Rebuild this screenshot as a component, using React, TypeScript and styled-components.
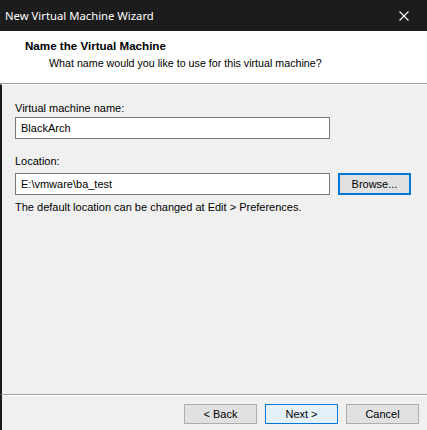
import React from 'react'
import styled, { createGlobalStyle } from 'styled-components'

const GlobalStyle = createGlobalStyle`
  html, body {
    margin: 0;
    padding: 0;
    background: #f0f0f0;
  }
  * {
    box-sizing: border-box;
  }
`

const Window = styled.div`
  width: 427px;
  height: 430px;
  display: flex;
  flex-direction: column;
  background: #f0f0f0;
  font-family: "Liberation Sans", Arial, sans-serif;
  font-size: 11px;
  color: #000;
  overflow: hidden;
`

const TitleBar = styled.div`
  height: 31px;
  flex: none;
  display: flex;
  align-items: center;
  justify-content: space-between;
  padding-left: 5px;
  background: #1c1c1c;
  color: #fff;
  font-family: "Noto Sans", "Open Sans", sans-serif;
  font-size: 11.3px;
`

const CloseButton = styled.div`
  width: 46px;
  height: 31px;
  display: flex;
  align-items: center;
  justify-content: center;
`

const Header = styled.div`
  height: 53px;
  flex: none;
  background: #fff;
  padding: 8px 0 0 25px;
  border-bottom: 1px solid #a0a0a0;
`

const HeaderTitle = styled.div`
  font-weight: bold;
  font-size: 11.6px;
  line-height: 14px;
`

const HeaderSub = styled.div`
  margin-top: 3px;
  padding-left: 24px;
  font-size: 10.7px;
  line-height: 14px;
`

const Body = styled.div`
  flex: 1;
  display: flex;
  flex-direction: column;
  padding: 16px 0 0 13px;
  border-left: 2px solid #1a1a1a;
  border-top: 1px solid #fff;
`

const Label = styled.div<{ $gap?: number }>`
  line-height: 14px;
  margin-top: ${p => p.$gap ?? 0}px;
`

const Row = styled.div<{ $gap: number }>`
  display: flex;
  align-items: center;
  gap: 8px;
  margin-top: ${p => p.$gap}px;
`

const TextBox = styled.div`
  width: 315px;
  height: 22px;
  display: flex;
  align-items: center;
  padding-left: 5px;
  background: #fff;
  border: 1px solid #7a7a7a;
`

const Hint = styled.div`
  margin-top: 5px;
  line-height: 14px;
`

const Footer = styled.div`
  height: 36px;
  flex: none;
  display: flex;
  justify-content: flex-end;
  align-items: flex-start;
  gap: 8px;
  padding: 9px 8px 0 0;
  border-left: 2px solid #1a1a1a;
  border-top: 1px solid #a0a0a0;
  box-shadow: inset 0 1px 0 #fff;
`

const Button = styled.div<{ $focus?: boolean }>`
  width: 73px;
  height: 20px;
  display: flex;
  align-items: center;
  justify-content: center;
  background: ${p => (p.$focus ? '#e5f1fb' : '#e1e1e1')};
  border: 1px solid ${p => (p.$focus ? '#0078d7' : '#adadad')};
`

const BrowseButton = styled(Button)`
  height: 22px;
  border: 2px solid #0078d7;
  background: #e1e1e1;
`

export default function App() {
  return (
    <>
      <GlobalStyle />
      <Window>
        <TitleBar>
          <span>New Virtual Machine Wizard</span>
          <CloseButton>
            <svg width="10" height="10" viewBox="0 0 10 10">
              <path d="M0.5 0.5 L9.5 9.5 M9.5 0.5 L0.5 9.5" stroke="#fff" strokeWidth="1.1" />
            </svg>
          </CloseButton>
        </TitleBar>
        <Header>
          <HeaderTitle>Name the Virtual Machine</HeaderTitle>
          <HeaderSub>What name would you like to use for this virtual machine?</HeaderSub>
        </Header>
        <Body>
          <Label>Virtual machine name:</Label>
          <Row $gap={2}>
            <TextBox>BlackArch</TextBox>
          </Row>
          <Label $gap={15}>Location:</Label>
          <Row $gap={5}>
            <TextBox>E:\vmware\ba_test</TextBox>
            <BrowseButton>Browse...</BrowseButton>
          </Row>
          <Hint>The default location can be changed at Edit &gt; Preferences.</Hint>
        </Body>
        <Footer>
          <Button>&lt; Back</Button>
          <Button $focus>Next &gt;</Button>
          <Button>Cancel</Button>
        </Footer>
      </Window>
    </>
  )
}
